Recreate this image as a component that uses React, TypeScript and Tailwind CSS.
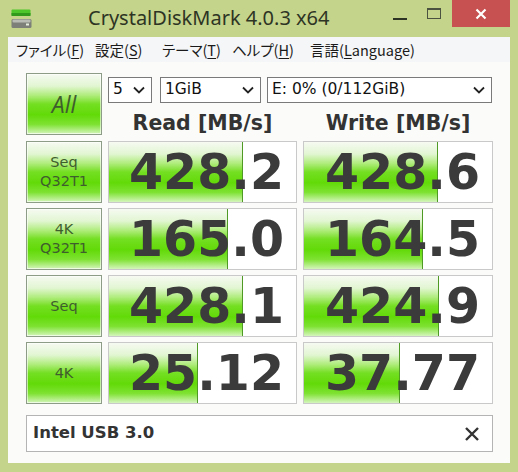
import React from 'react';

interface Row {
    label: string[];
    read: string;
    write: string;
    readPct: number;
    writePct: number;
}

const rows: Row[] = [
    { label: ['Seq', 'Q32T1'], read: '428.2', write: '428.6', readPct: 71.5, writePct: 71.5 },
    { label: ['4K', 'Q32T1'], read: '165.0', write: '164.5', readPct: 63.5, writePct: 63.5 },
    { label: ['Seq'], read: '428.1', write: '424.9', readPct: 71.5, writePct: 72 },
    { label: ['4K'], read: '25.12', write: '37.77', readPct: 47.5, writePct: 51 },
];

const greenBg =
    'bg-[linear-gradient(to_bottom,#f6faf2_0%,#e2f6d2_20%,#aeec7a_36%,#74df22_50%,#62da08_68%,#7ee232_84%,#d4f5bc_100%)]';

function Chevron() {
    return (
        <svg width="12" height="8" viewBox="0 0 12 8" className="shrink-0">
            <polyline points="1,1.5 6,6.5 11,1.5" fill="none" stroke="#222" strokeWidth="1.8" />
        </svg>
    );
}

function Select({ value, className }: { value: string; className: string }) {
    return (
        <div
            className={`flex items-center justify-between h-[26px] border border-[#7a7a7a] bg-white pl-[4px] pr-[6px] text-[15.5px] text-[#111] ${className}`}
        >
            <span>{value}</span>
            <Chevron />
        </div>
    );
}

function LabelButton({ children }: { children: React.ReactNode }) {
    return (
        <div
            className={`w-[76px] h-full flex flex-col items-center justify-center border border-[#8d9c86] ${greenBg} text-[#3f5e2e] shadow-[inset_0_0_0_1px_rgba(255,255,255,0.6)]`}
        >
            {children}
        </div>
    );
}

function ValueBox({ value, pct, wide }: { value: string; pct: number; wide?: boolean }) {
    return (
        <div
            className={`relative h-full border border-[#c9c9c9] bg-white overflow-hidden ${wide ? 'w-[190px]' : 'w-[189px]'}`}
        >
            <div
                className={`absolute left-0 top-0 bottom-0 ${greenBg} border-r border-[#4f9a24]`}
                style={{ width: `${pct}%` }}
            />
            <div className="relative h-full flex items-center justify-end pr-[12px] text-[49px] font-bold text-[#3b3b3b] leading-none">
                {value}
            </div>
        </div>
    );
}

function Mnemonic({ pre, key_, post }: { pre: string; key_: string; post: string }) {
    return (
        <span>
            {pre}
            <span className="underline underline-offset-[2px]">{key_}</span>
            {post}
        </span>
    );
}

export default function App() {
    return (
        <div
            className="w-[518px] h-[472px] bg-[#c4d48b] flex flex-col overflow-hidden"
            style={{ fontFamily: '"DejaVu Sans", sans-serif' }}
        >
            {/* title bar */}
            <div className="h-[37px] flex items-start shrink-0">
                <div className="w-[40px] pl-[11px] pt-[9px]">
                    <svg width="21" height="20" viewBox="0 0 21 20">
                        <rect x="0.5" y="0.5" width="19" height="6" rx="1" fill="#4cc62a" />
                        <rect x="0.5" y="4" width="19" height="3" fill="#2f9a1c" />
                        <rect x="0.5" y="10" width="20" height="9" rx="1.5" fill="#7c8078" />
                        <rect x="1.5" y="10.5" width="18" height="3" rx="1" fill="#b8bcb4" />
                        <rect x="15" y="14.5" width="3" height="2" fill="#e8eee0" />
                    </svg>
                </div>
                <div
                    className="pl-[48px] pt-[6px] text-[20px] text-[#2e3424] leading-[24px]"
                    style={{ fontFamily: '"Noto Sans", sans-serif' }}
                >
                    CrystalDiskMark 4.0.3 x64
                </div>
                <div className="ml-auto flex items-start">
                    <div className="w-[34px] h-[27px] pl-[1px] pt-[18px]">
                        <div className="w-[14px] h-[2px] bg-[#2e3424]" />
                    </div>
                    <div className="w-[26px] h-[27px] pl-[1px] pt-[8px]">
                        <div className="w-[14px] h-[11px] border border-[#4b5340] border-t-2" />
                    </div>
                    <div className="w-[58px] h-[27px] bg-[#c75050] flex items-center justify-center mr-[8px]">
                        <svg width="12" height="12" viewBox="0 0 12 12">
                            <path d="M1.5 1.5 L10.5 10.5 M10.5 1.5 L1.5 10.5" stroke="#fff" strokeWidth="2.2" />
                        </svg>
                    </div>
                </div>
            </div>

            {/* client */}
            <div className="mx-[8px] h-[426px] bg-[#fbfcfa] flex flex-col">
                <div
                    className="h-[25px] bg-[#f5f6f7] flex items-center pl-[8px] text-[14.5px] [font-feature-settings:'palt'] text-[#1a1a1a] shrink-0"
                    style={{ fontFamily: '"Noto Sans CJK JP", "Noto Sans", sans-serif' }}
                >
                    <span className="w-[79px]">
                        <Mnemonic pre="ファイル(" key_="F" post=")" />
                    </span>
                    <span className="w-[67px]">
                        <Mnemonic pre="設定(" key_="S" post=")" />
                    </span>
                    <span className="w-[70px]">
                        <Mnemonic pre="テーマ(" key_="T" post=")" />
                    </span>
                    <span className="w-[78px]">
                        <Mnemonic pre="ヘルプ(" key_="H" post=")" />
                    </span>
                    <Mnemonic pre="言語(" key_="L" post="anguage)" />
                </div>

                <div className="pl-[18px] pt-[11px] flex flex-col">
                    {/* top */}
                    <div className="flex gap-[6px] h-[62px]">
                        <LabelButton>
                            <span
                                className="text-[23px] italic"
                                style={{ fontFamily: '"Open Sans", sans-serif' }}
                            >
                                All
                            </span>
                        </LabelButton>
                        <div className="flex flex-col">
                            <div className="flex gap-[8px] mt-[4px]">
                                <Select value="5" className="w-[44px]" />
                                <Select value="1GiB" className="w-[101px]" />
                                <Select value="E: 0% (0/112GiB)" className="w-[225px] ml-[-2px]" />
                            </div>
                            <div className="flex gap-[6px] mt-[8px] text-[20.5px] font-bold text-[#333] leading-[24px]">
                                <div className="w-[189px] text-center">Read [MB/s]</div>
                                <div className="w-[190px] text-center">Write [MB/s]</div>
                            </div>
                        </div>
                    </div>

                    {/* rows */}
                    <div className="flex flex-col gap-[5px] mt-[6px]">
                        {rows.map((r, i) => (
                            <div key={i} className="flex gap-[6px] h-[62px]">
                                <LabelButton>
                                    {r.label.map((l) => (
                                        <span key={l} className="text-[14.5px] leading-[19px]">
                                            {l}
                                        </span>
                                    ))}
                                </LabelButton>
                                <ValueBox value={r.read} pct={r.readPct} />
                                <ValueBox value={r.write} pct={r.writePct} wide />
                            </div>
                        ))}
                    </div>

                    {/* footer */}
                    <div className="mt-[11px] w-[467px] h-[37px] border border-[#b4b4b4] bg-white flex items-center justify-between pl-[6px] pr-[12px]">
                        <span className="text-[16.5px] font-bold text-[#333]">Intel USB 3.0</span>
                        <svg width="16" height="16" viewBox="0 0 16 16">
                            <path d="M2 2 L14 14 M14 2 L2 14" stroke="#333" strokeWidth="2.4" />
                        </svg>
                    </div>
                </div>
            </div>
        </div>
    );
}
